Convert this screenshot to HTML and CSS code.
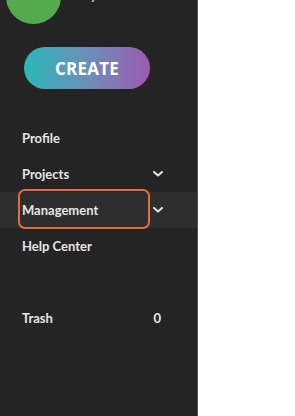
FILE: index.html
```html
<!DOCTYPE html>
<html>
<head>
<meta charset="utf-8">
<link rel="stylesheet" href="styles.css">
</head>
<body>
<div class="page">
  <aside class="sidebar">
    <div class="header">
      <div class="avatar"></div>
      <div class="studio">My Studio</div>
    </div>
    <div class="create-wrap">
      <button class="create">CREATE</button>
    </div>
    <nav class="nav">
      <div class="item"><span class="label">Profile</span></div>
      <div class="item"><span class="label">Projects</span>
        <svg class="chev" width="10" height="6" viewBox="0 0 10 6"><path d="M1 1 L5 4.5 L9 1" fill="none" stroke="#e6e6e6" stroke-width="2" stroke-linecap="round" stroke-linejoin="round"/></svg>
      </div>
      <div class="item active"><span class="label">Management</span>
        <svg class="chev" width="10" height="6" viewBox="0 0 10 6"><path d="M1 1 L5 4.5 L9 1" fill="none" stroke="#e6e6e6" stroke-width="2" stroke-linecap="round" stroke-linejoin="round"/></svg>
      </div>
      <div class="item"><span class="label">Help Center</span></div>
      <div class="spacer"></div>
      <div class="item"><span class="label">Trash</span><span class="count">0</span></div>
    </nav>
  </aside>
  <main class="content"></main>
</div>
</body>
</html>
```
FILE: styles.css
```css
html, body {
  margin: 0;
  padding: 0;
  height: 100%;
  background: #ffffff;
  overflow: hidden;
}
.page {
  display: flex;
  height: 416px;
}
.sidebar {
  width: 197px;
  flex: none;
  background: #242424;
  border-right: 1px solid #505050;
  font-family: Lato, "Open Sans", sans-serif;
  color: #e6e6e6;
}
.content {
  flex: 1;
  background: #ffffff;
}
.header {
  display: flex;
  align-items: flex-end;
  margin-top: -31px;
  padding-left: 6px;
  height: 55px;
}
.avatar {
  width: 55px;
  height: 55px;
  border-radius: 50%;
  background: #55a94f;
  flex: none;
}
.studio {
  margin-left: 14px;
  font-size: 16px;
  line-height: 16px;
  color: #d0d0d0;
  align-self: flex-start;
  margin-top: 16px;
}
.create-wrap {
  padding: 23px 0 0 24px;
}
.create {
  width: 126px;
  height: 42px;
  border: none;
  border-radius: 21px;
  background: linear-gradient(90deg, #2cb7b9 0%, #6b8fb8 50%, #9c5bb1 100%);
  color: #ffffff;
  font-family: "Open Sans", Lato, sans-serif;
  font-weight: 700;
  font-size: 17px;
  letter-spacing: 0.2px;
  padding: 0;
  display: block;
}
.nav {
  margin-top: 31px;
  display: flex;
  flex-direction: column;
}
.item {
  position: relative;
  height: 36px;
  display: flex;
  align-items: center;
  justify-content: space-between;
  padding: 0 35px 0 22px;
  font-size: 13px;
  font-weight: 700;
}
.item.active {
  background: #2e2e2e;
}
.item.active::after {
  content: "";
  position: absolute;
  left: 18px;
  top: -3px;
  width: 128px;
  height: 36px;
  border: 2px solid #e86a3c;
  border-radius: 7px;
}
.chev {
  display: block;
  margin-right: -1px;
}
.spacer {
  height: 36px;
}
.count {
  font-weight: 700;
  margin-right: 1px;
}
```
